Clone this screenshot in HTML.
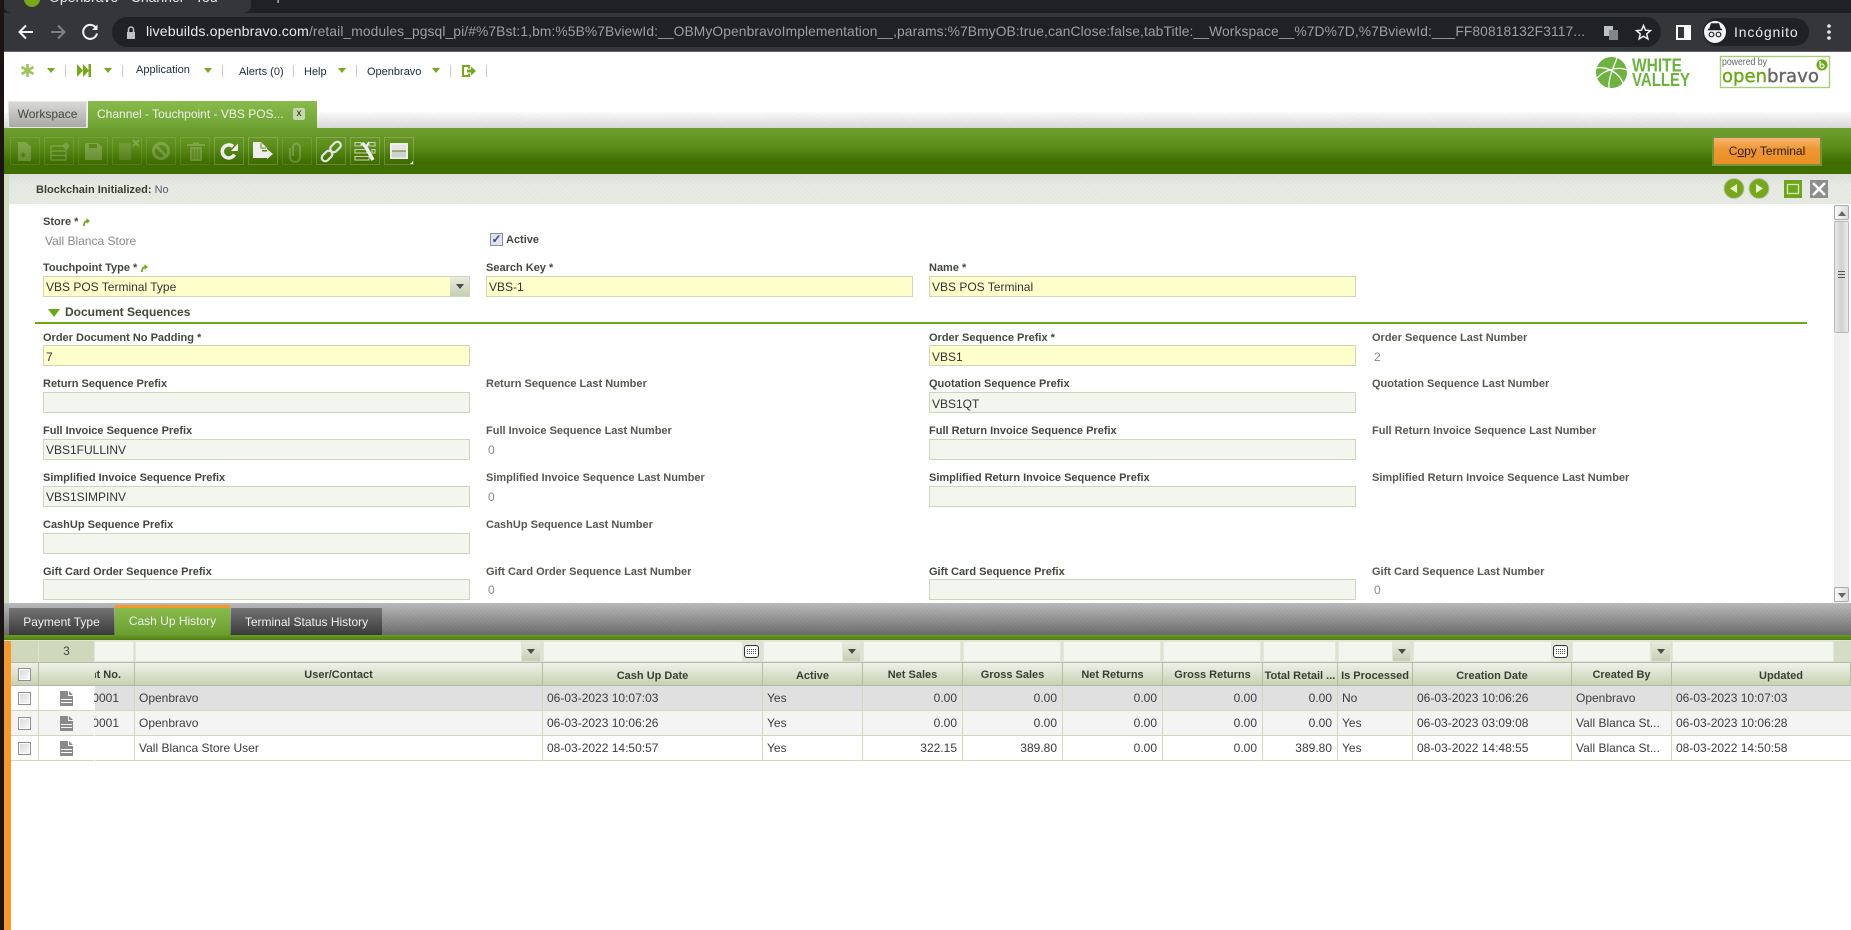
<!DOCTYPE html>
<html lang="en"><head><meta charset="utf-8"><title>Openbravo - Channel - Touchpoint</title>
<style>
html,body{margin:0;padding:0;width:1851px;height:930px;overflow:hidden;background:#fff}
body{position:relative;font-family:"Liberation Sans",sans-serif;font-size:12px;color:#333}
.a,.l,.v,.i,.n,.s,.ar{position:absolute}
.l{font-weight:bold;font-size:11px;line-height:14px;color:#42483c;white-space:nowrap;margin-top:1px}
.l.g{color:#55594f}
.v{font-size:12px;line-height:16px;color:#8a8a8a;white-space:nowrap}
.i{box-sizing:border-box;width:427px;height:21px;border:1px solid #cfd6b8;background:#f3f6ee;padding:0 2px;line-height:21px;color:#333;white-space:nowrap}
.i.r{background:#ffffcc}
.n{font-size:11px;line-height:14px;color:#1b2b3c;white-space:nowrap}
.s{width:1px;height:12px;top:65px;background:#c9c9c9}
.ar{width:0;height:0;border-left:4.500px solid transparent;border-right:4.500px solid transparent;border-top:5px solid #76a81a;top:68px}
.gr{position:absolute;left:95px;display:flex;width:1756px;height:25px}
.gr>div{box-sizing:border-box;flex:none;height:25px;border-right:1px solid #d2d9bb;border-bottom:1px solid #d2d9bb;line-height:24px;padding:0 5px 0 4px;white-space:nowrap;overflow:hidden;color:#3c3c3c}
.gr>div.t{text-align:right}
.hd{position:absolute;left:95px;top:663px;display:flex;width:1756px;height:23px}
.hd>div{box-sizing:border-box;flex:none;height:23px;border-right:1px solid #b8bdab;border-bottom:1px solid #b4b9a8;text-align:center;font-weight:bold;font-size:11px;line-height:25px;color:#3a3f33;white-space:nowrap;overflow:hidden;background:linear-gradient(#eff1ea,#c8d2b2);position:relative}
.fl{position:absolute;top:642px;height:19px;background:#f3f6ee;box-shadow:0 0 0 1px #e3e7d9}
.fb{position:absolute;top:642px;height:19px;background:linear-gradient(#e9ecdf,#c6cfb3)}
.fb:after{content:"";position:absolute;left:50%;top:7px;margin-left:-4px;border-left:4px solid transparent;border-right:4px solid transparent;border-top:5px solid #4a4a4a}
.cal{position:absolute;top:645px;width:13px;height:11px;background:#fff;border:1px solid #333;border-radius:3px}
.cal:after{content:"";position:absolute;left:2px;top:3px;width:9px;height:6px;background:repeating-linear-gradient(0deg,#fff 0 1px,transparent 1px 2px),repeating-linear-gradient(90deg,#444 0 1px,#fff 1px 2px)}
.cb{position:absolute;left:18px;width:11px;height:11px;border:1px solid #8f8f8f;background:linear-gradient(135deg,#d8d8d8,#fafafa);box-shadow:inset 0 0 0 1px #fff}
.lt{position:absolute;top:608px;height:27px;background:linear-gradient(#737373,#3a3a3a);color:#f0f0f0;line-height:28px;text-align:center;box-sizing:border-box}
</style></head><body>

<!-- Chrome -->
<div class="a" style="left:0;top:0;width:1851px;height:13px;background:#202124"></div>
<div class="a" style="left:4px;top:0;width:247px;height:13px;background:#35363a;border-radius:0 0 8px 8px;overflow:hidden;color:#e8eaed;font-size:14px;line-height:16px;white-space:nowrap"><span style="position:absolute;left:45px;top:-11px">Openbravo - Channel - Tou</span><span style="position:absolute;left:20px;top:-9px;width:16px;height:16px;border-radius:50%;background:#76a81a"></span></div>
<div class="a" style="left:274px;top:-9px;color:#e8eaed;font-size:14px">+</div>
<div class="a" style="left:0;top:13px;width:1851px;height:38px;background:#35363a"></div>
<div class="a" style="left:0;top:51px;width:1851px;height:1px;background:#5f6368"></div>
<div class="a" style="left:112px;top:17px;width:1549px;height:30px;border-radius:15px;background:#202124"></div>
<div class="a" style="left:1703px;top:18px;width:106px;height:28px;border-radius:14px;background:#202124"></div>
<svg class="a" style="left:0;top:13px" width="1851" height="38" viewBox="0 13 1851 38" fill="none">
<path d="M33 32H20M26 25.500L19.500 32L26 38.500" stroke="#f1f3f4" stroke-width="2"/>
<path d="M51 32H64M58 25.500L64.500 32L58 38.500" stroke="#7d8084" stroke-width="2"/>
<path d="M96 28A7 7 0 1 0 97 33.500" stroke="#f1f3f4" stroke-width="2"/><path d="M97.500 24.500V30H92z" fill="#f1f3f4"/>
<path d="M128.500 32v-2.500a2.500 2.500 0 0 1 5 0V32" stroke="#bdc1c6" stroke-width="1.500"/><path d="M127 32h8v7h-8z" fill="#bdc1c6"/>
<rect x="1604" y="26" width="9" height="10" fill="#bdc1c6"/><rect x="1609" y="30" width="9" height="10" fill="#80868b"/>
<path d="M1643.500 25.500l2 4.700 5 .4-3.800 3.300 1.200 5-4.400-2.700-4.400 2.700 1.200-5-3.800-3.300 5-.4z" stroke="#e8eaed" stroke-width="1.500"/>
<rect x="1677" y="26" width="13" height="13" stroke="#fff" stroke-width="2"/><rect x="1684" y="26" width="6" height="13" fill="#fff"/>
<circle cx="1715" cy="32" r="11" fill="#f1f3f4"/><path d="M1708 29.500h14M1710 29l1.500-5h7l1.500 5z" stroke="#202124" stroke-width="1.500" fill="#202124"/><circle cx="1711.500" cy="34.500" r="2.300" stroke="#202124" stroke-width="1.200"/><circle cx="1718.500" cy="34.500" r="2.300" stroke="#202124" stroke-width="1.200"/>
<circle cx="1829" cy="26" r="1.800" fill="#e8eaed"/><circle cx="1829" cy="32" r="1.800" fill="#e8eaed"/><circle cx="1829" cy="38" r="1.800" fill="#e8eaed"/>
</svg>
<div class="a" style="left:146px;top:23px;width:1450px;font-size:13.800px;line-height:18px;color:#9aa0a6;white-space:nowrap;overflow:hidden;letter-spacing:.11px"><span style="color:#e8eaed;font-size:14.200px;letter-spacing:.12px">livebuilds.openbravo.com</span>/retail_modules_pgsql_pi/#%7Bst:1,bm:%5B%7BviewId:__OBMyOpenbravoImplementation__,params:%7BmyOB:true,canClose:false,tabTitle:__Workspace__%7D%7D,%7BviewId:___FF80818132F3117...</div>
<div class="a" style="left:1734px;top:23px;font-size:14px;line-height:18px;color:#e8eaed;letter-spacing:.85px">Incógnito</div>
<div class="a" style="left:0;top:0;width:4px;height:930px;background:#1a1415"></div>

<!-- Nav -->
<svg class="a" style="left:20px;top:63px" width="15" height="15" viewBox="0 0 15 15" fill="none" stroke="#9cc25a" stroke-width="2.600"><path d="M7.500 1V14M1.500 4L13.500 11M13.500 4L1.500 11"/></svg>
<div class="ar" style="left:47px"></div><div class="s" style="left:65px"></div>
<svg class="a" style="left:77px;top:64px" width="14" height="13" viewBox="0 0 14 13" fill="#76a81a"><path d="M0 0L6 6.500L0 13zM6 0L12 6.500L6 13z"/><rect x="11.500" y="0" width="2.500" height="13"/></svg>
<div class="ar" style="left:104px"></div><div class="s" style="left:122px"></div>
<div class="n" style="left:136px;top:63px">Application</div><div class="ar" style="left:204px"></div><div class="s" style="left:222px"></div>
<div class="n" style="left:239px;top:65px">Alerts (0)</div><div class="s" style="left:293px"></div>
<div class="n" style="left:304px;top:65px">Help</div><div class="ar" style="left:338px"></div><div class="s" style="left:356px"></div>
<div class="n" style="left:367px;top:65px">Openbravo</div><div class="ar" style="left:432px"></div><div class="s" style="left:450px"></div>
<svg class="a" style="left:461px;top:64px" width="16" height="14" viewBox="0 0 16 14"><path d="M1 1H9V4.500H7V3H3V11H7V9.500H9V13H1z" fill="#76a81a"/><path d="M6 5.500H10V2.500L15 7L10 11.500V8.500H6z" fill="#76a81a"/></svg>
<div class="s" style="left:486px"></div>

<!-- Logos -->
<svg class="a" style="left:1590px;top:52px" width="261" height="40" viewBox="1590 52 261 40" fill="none">
<circle cx="1611.500" cy="72.500" r="15.500" fill="#6cb33f"/>
<path d="M1596 68C1606 66 1620 72 1624 86M1597 78C1604 70 1618 66 1627 70M1617 58C1614 66 1608 78 1609 88" stroke="#fff" stroke-width="1.300"/>
<text x="1632" y="71.500" font-family="Liberation Sans" font-weight="bold" font-size="18.500" fill="#6cb33f" textLength="50" lengthAdjust="spacingAndGlyphs">WHITE</text>
<text x="1632" y="86" font-family="Liberation Sans" font-weight="bold" font-size="18.500" fill="#6cb33f" textLength="58" lengthAdjust="spacingAndGlyphs">VALLEY</text>
<rect x="1720.500" y="56.500" width="109" height="31" fill="#fff" stroke="#a9cf75" stroke-width="1.400"/>
<text x="1722" y="65" font-family="Liberation Sans" font-size="10" fill="#666" textLength="45" lengthAdjust="spacingAndGlyphs">powered by</text>
<text x="1722" y="82" font-family="DejaVu Sans" font-size="18" fill="#6aa814" stroke="#6aa814" stroke-width=".4" textLength="45" lengthAdjust="spacingAndGlyphs">open</text>
<text x="1767" y="82" font-family="DejaVu Sans" font-size="18" fill="#666" stroke="#666" stroke-width=".4" textLength="52" lengthAdjust="spacingAndGlyphs">bravo</text>
<circle cx="1822" cy="65" r="5.500" fill="#6aa814"/><circle cx="1822" cy="66" r="2" fill="none" stroke="#fff" stroke-width="1.200"/><path d="M1820 66V61" stroke="#fff" stroke-width="1.200"/>
</svg>

<!-- Top tabs -->
<div class="a" style="left:4px;top:112px;width:1847px;height:16px;background:repeating-linear-gradient(45deg,rgba(0,0,0,.04) 0 1px,transparent 1px 2px),linear-gradient(#fff,#dcdcdc)"></div>
<div class="a" style="left:8px;top:101px;width:79px;height:27px;box-sizing:border-box;border:1px solid #e6e6e6;background:linear-gradient(#d8d8d6,#a9a9a6);color:#444;text-align:center;line-height:24px">Workspace</div>
<div class="a" style="left:88px;top:101px;width:229px;height:27px;background:linear-gradient(#8abb4c,#6da233);color:#f1f5e8;line-height:27px;padding-left:9px;box-sizing:border-box;white-space:nowrap">Channel - Touchpoint - VBS POS...</div>
<div class="a" style="left:293px;top:108px;width:12px;height:12px;background:#c7d8a8;color:#222;font-size:10px;line-height:12px;text-align:center;border-radius:2px">x</div>

<!-- Green toolbar -->
<div class="a" style="left:4px;top:128px;width:1847px;height:46px;background:linear-gradient(#6f9f31 0,#5c8d1a 40%,#3f6d00 75%,#3f6d00)"></div>
<svg class="a" style="left:0;top:128px" width="430" height="46" viewBox="0 128 430 46" fill="none">
<g stroke="#fff" stroke-opacity=".1"><rect x="10.500" y="137.500" width="29" height="27"/><rect x="44.500" y="137.500" width="29" height="27"/><rect x="78.500" y="137.500" width="29" height="27"/><rect x="112.500" y="137.500" width="29" height="27"/><rect x="146.500" y="137.500" width="29" height="27"/><rect x="180.500" y="137.500" width="29" height="27"/><rect x="282.500" y="137.500" width="29" height="27"/></g>
<g stroke="#fff" stroke-opacity=".2"><rect x="214.500" y="137.500" width="29" height="27"/><rect x="248.500" y="137.500" width="29" height="27"/><rect x="316.500" y="137.500" width="29" height="27"/><rect x="350.500" y="137.500" width="29" height="27"/><rect x="384.500" y="137.500" width="29" height="27"/></g>
<g opacity=".2">
<path d="M18 142H26L31 147V161H18z" fill="#fff"/><path d="M23 152V158M20.500 153.500L25.500 156.500M25.500 153.500L20.500 156.500" stroke="#4e7e10"/>
<path d="M51 146H66V160H51zM51 151H66M51 155.500H66" stroke="#fff" stroke-width="1.500"/><circle cx="66" cy="146" r="3" fill="#fff"/>
<path d="M85 143H98L102 147V160H85z" fill="#fff"/><rect x="89" y="144" width="8" height="4" fill="#4e7e10"/>
<path d="M119 143H131V160H119z" fill="#fff" fill-opacity=".5"/><path d="M133 140L139 146M139 140L133 146" stroke="#fff" stroke-width="2"/>
<circle cx="161" cy="151" r="7.500" stroke="#fff" stroke-width="3"/><path d="M156 146L166 156" stroke="#fff" stroke-width="3"/>
<path d="M187 145H205" stroke="#fff" stroke-width="2"/><path d="M190 147H202V161H190z" fill="#fff"/><path d="M193 149V159M196 149V159M199 149V159" stroke="#4e7e10"/><rect x="193" y="142.500" width="6" height="2" fill="#fff"/>
<path d="M293 156V147A3.500 3.500 0 0 1 300 147V157A5 5 0 0 1 290 157V148" stroke="#fff" stroke-width="2"/>
</g>
<path d="M233 146.500A6.500 6.500 0 1 0 234.500 154.500" stroke="#eee" stroke-width="3.500"/><path d="M238 143.500V151H231z" fill="#eee"/>
<path d="M253 142H261L267 148V150H262V155H267V158H253z" fill="#eee"/><path d="M262 151.500H267V149L273 154L267 159V156H262z" fill="#eee"/><path d="M261 143V148H266" stroke="#5c8d1a"/>
<g stroke="#e4e4e4" stroke-width="2.200"><rect x="321" y="152.500" width="12" height="7" rx="3.500" transform="rotate(-45 327 156)"/><rect x="329.500" y="143.500" width="12" height="7" rx="3.500" transform="rotate(-45 335.500 147)"/></g>
<g stroke="#c8d4b0" stroke-width="1.100"><path d="M355 142.500H361V146H355zM355 149.500H367V153H355zM355 156.500H369V160H355zM369 142.500H375V146H369zM372 149.500H375V153H372z"/></g>
<path d="M362 143L366 147L373 160" stroke="#eee" stroke-width="3.500"/><path d="M366 147L369 142" stroke="#eee" stroke-width="2"/>
<rect x="391" y="144" width="16" height="14" stroke="#eee" stroke-width="2"/><rect x="392" y="145" width="14" height="5.500" fill="#e4e4e4"/><rect x="392" y="151.500" width="14" height="6" fill="#d0d0d0"/><path d="M413 161V164H410z" fill="#fff"/>
</svg>
<div class="a" style="left:1712px;top:136px;width:110px;height:30px;box-sizing:border-box;border:2px solid #71953a;background:linear-gradient(#f7b46f,#ee9631 45%,#eb8f24);color:#2a1c05;text-align:center;line-height:26px">C<u>o</u>py Terminal</div>

<!-- Status -->
<div class="a" style="left:4px;top:174px;width:5px;height:429px;background:#d2dcc0"></div>
<div class="a" style="left:9px;top:174px;width:1842px;height:30px;background:repeating-linear-gradient(45deg,rgba(0,0,0,.025) 0 1px,transparent 1px 3px),linear-gradient(#dfe0dc,#e8ebe4 40%)"></div>
<div class="a" style="left:36px;top:183px;font-size:11px;line-height:14px;color:#3a3f33"><b>Blockchain Initialized:</b> <span style="color:#55606a">No</span></div>
<svg class="a" style="left:1720px;top:176px" width="112" height="26" viewBox="1720 176 112 26">
<circle cx="1734" cy="188.500" r="10" fill="#76a81a" stroke="#bfc4b8"/><path d="M1737 184V193L1730 188.500z" fill="#e8f0d8"/>
<circle cx="1759" cy="188.500" r="10" fill="#76a81a" stroke="#bfc4b8"/><path d="M1756 184V193L1763 188.500z" fill="#e8f0d8"/>
<rect x="1784" y="180" width="18" height="18" fill="#6fa51e"/><rect x="1787.500" y="184.500" width="11" height="9" fill="none" stroke="#d8e8b8" stroke-width="1.300"/>
<rect x="1810" y="180" width="18" height="18" fill="#8d8d8d"/><path d="M1813 183L1825 195M1825 183L1813 195" stroke="#fff" stroke-width="2.500"/>
</svg>

<!-- Scrollbar -->
<div class="a" style="left:1834px;top:205px;width:15px;height:398px;background:#f0f0f0"></div>
<div class="a" style="left:1834px;top:205px;width:15px;height:15px;box-sizing:border-box;border:1px solid #aaa;border-radius:2px;background:linear-gradient(90deg,#fafafa,#ddd)"></div>
<div class="a" style="left:1838px;top:211px;border-left:4px solid transparent;border-right:4px solid transparent;border-bottom:5px solid #666"></div>
<div class="a" style="left:1834px;top:221px;width:15px;height:112px;box-sizing:border-box;border:1px solid #b8b8b8;border-radius:2px;background:linear-gradient(90deg,#e8e8e8,#d0d0d0 50%,#ececec)"></div>
<div class="a" style="left:1838px;top:271px;width:7px;height:8px;background:repeating-linear-gradient(#555 0 1px,transparent 1px 3px)"></div>
<div class="a" style="left:1834px;top:587px;width:15px;height:15px;box-sizing:border-box;border:1px solid #aaa;border-radius:2px;background:linear-gradient(90deg,#fafafa,#ddd)"></div>
<div class="a" style="left:1838px;top:593px;border-left:4px solid transparent;border-right:4px solid transparent;border-top:5px solid #666"></div>

<!-- Form -->
<div class="l" style="left:43px;top:214px">Store *</div>
<svg class="a" style="left:82px;top:217px" width="8" height="9" viewBox="0 0 7 8" fill="#6aa814"><path d="M1 8C1 5 2 3 4 3V1L7 3.500L4 6V4.500C3 4.500 2.500 6 2.500 8z"/></svg>
<div class="v" style="left:45px;top:233px;color:#888">Vall Blanca Store</div>
<div class="a" style="left:490px;top:233px;width:11px;height:11px;border:1px solid #8a8f98;background:#dfe4ec;color:#2b4a9a;font-size:12px;line-height:11px;text-align:center;font-weight:bold">✓</div>
<div class="l" style="left:506px;top:232px">Active</div>

<div class="l" style="left:43px;top:260px">Touchpoint Type *</div>
<svg class="a" style="left:140px;top:263px" width="8" height="9" viewBox="0 0 7 8" fill="#6aa814"><path d="M1 8C1 5 2 3 4 3V1L7 3.500L4 6V4.500C3 4.500 2.500 6 2.500 8z"/></svg>
<div class="l" style="left:486px;top:260px">Search Key *</div>
<div class="l" style="left:929px;top:260px">Name *</div>
<div class="i r" style="left:43px;top:276px">VBS POS Terminal Type</div>
<div class="fb" style="left:450px;top:277px;width:19px;height:19px"></div>
<div class="i r" style="left:486px;top:276px">VBS-1</div>
<div class="i r" style="left:929px;top:276px">VBS POS Terminal</div>

<div class="a" style="left:48px;top:309px;border-left:6px solid transparent;border-right:6px solid transparent;border-top:8px solid #6aa814"></div>
<div class="l" style="left:65px;top:304px;font-size:12px">Document Sequences</div>
<div class="a" style="left:35px;top:322px;width:1772px;height:2px;background:#6aa814"></div>

<div class="l" style="left:43px;top:330px">Order Document No Padding *</div>
<div class="i r" style="left:43px;top:345px;line-height:23px">7</div>
<div class="l" style="left:929px;top:330px">Order Sequence Prefix *</div>
<div class="i r" style="left:929px;top:345px;line-height:23px">VBS1</div>
<div class="l g" style="left:1372px;top:330px">Order Sequence Last Number</div>
<div class="v" style="left:1374px;top:349px">2</div>

<div class="l" style="left:43px;top:376px">Return Sequence Prefix</div>
<div class="i" style="left:43px;top:392px"></div>
<div class="l g" style="left:486px;top:376px">Return Sequence Last Number</div>
<div class="l" style="left:929px;top:376px">Quotation Sequence Prefix</div>
<div class="i" style="left:929px;top:392px;line-height:23px">VBS1QT</div>
<div class="l g" style="left:1372px;top:376px">Quotation Sequence Last Number</div>

<div class="l" style="left:43px;top:423px">Full Invoice Sequence Prefix</div>
<div class="i" style="left:43px;top:439px">VBS1FULLINV</div>
<div class="l g" style="left:486px;top:423px">Full Invoice Sequence Last Number</div>
<div class="v" style="left:488px;top:442px">0</div>
<div class="l" style="left:929px;top:423px">Full Return Invoice Sequence Prefix</div>
<div class="i" style="left:929px;top:439px"></div>
<div class="l g" style="left:1372px;top:423px">Full Return Invoice Sequence Last Number</div>

<div class="l" style="left:43px;top:470px">Simplified Invoice Sequence Prefix</div>
<div class="i" style="left:43px;top:486px">VBS1SIMPINV</div>
<div class="l g" style="left:486px;top:470px">Simplified Invoice Sequence Last Number</div>
<div class="v" style="left:488px;top:489px">0</div>
<div class="l" style="left:929px;top:470px">Simplified Return Invoice Sequence Prefix</div>
<div class="i" style="left:929px;top:486px"></div>
<div class="l g" style="left:1372px;top:470px">Simplified Return Invoice Sequence Last Number</div>

<div class="l" style="left:43px;top:517px">CashUp Sequence Prefix</div>
<div class="i" style="left:43px;top:533px"></div>
<div class="l g" style="left:486px;top:517px">CashUp Sequence Last Number</div>

<div class="l" style="left:43px;top:564px">Gift Card Order Sequence Prefix</div>
<div class="i" style="left:43px;top:579px"></div>
<div class="l g" style="left:486px;top:564px">Gift Card Order Sequence Last Number</div>
<div class="v" style="left:488px;top:582px">0</div>
<div class="l" style="left:929px;top:564px">Gift Card Sequence Prefix</div>
<div class="i" style="left:929px;top:579px"></div>
<div class="l g" style="left:1372px;top:564px">Gift Card Sequence Last Number</div>
<div class="v" style="left:1374px;top:582px">0</div>

<!-- Lower tabs -->
<div class="a" style="left:4px;top:603px;width:1847px;height:32px;background:repeating-linear-gradient(45deg,rgba(0,0,0,.04) 0 1px,transparent 1px 3px),linear-gradient(#bcbcbc,#6c6c6c)"></div>
<div class="a" style="left:4px;top:635px;width:1847px;height:5px;background:linear-gradient(#6b9a2a,#4f7f10)"></div>
<div class="a" style="left:4px;top:640px;width:1847px;height:1px;background:#dfe5d3"></div>
<div class="lt" style="left:9px;width:105px">Payment Type</div>
<div class="lt" style="left:115px;top:605px;height:30px;width:115px;background:linear-gradient(#8abb4c,#6a9f30);border-top:3px solid #f7982a;line-height:26px">Cash Up History</div>
<div class="lt" style="left:231px;width:151px">Terminal Status History</div>

<!-- Grid -->
<div class="a" style="left:4px;top:641px;width:7px;height:289px;background:#f7982a"></div>
<div class="a" style="left:11px;top:641px;width:1840px;height:22px;background:#dde2d2"></div>
<div class="a" style="left:11px;top:641px;width:27px;height:21px;background:#cfd8bb"></div>
<div class="a" style="left:39px;top:641px;width:55px;height:21px;background:#cfd8bb;text-align:center;line-height:21px;color:#444">3</div>
<div class="a" style="left:11px;top:662px;width:1840px;height:1px;background:#b4b9a8"></div>
<div class="a" style="left:1833px;top:641px;width:18px;height:21px;background:#d5ddc6"></div>
<div class="fl" style="left:95px;width:38px"></div>
<div class="fl" style="left:136px;width:385px"></div><div class="fb" style="left:522px;width:18px"></div>
<div class="fl" style="left:544px;width:198px"></div><div class="a" style="left:743px;top:642px;width:17px;height:19px;background:#e2e6d8"></div><div class="cal" style="left:744px"></div>
<div class="fl" style="left:764px;width:78px"></div><div class="fb" style="left:843px;width:17px"></div>
<div class="fl" style="left:864px;width:96px"></div>
<div class="fl" style="left:964px;width:96px"></div>
<div class="fl" style="left:1064px;width:96px"></div>
<div class="fl" style="left:1164px;width:96px"></div>
<div class="fl" style="left:1264px;width:71px"></div>
<div class="fl" style="left:1339px;width:53px"></div><div class="fb" style="left:1393px;width:17px"></div>
<div class="fl" style="left:1414px;width:137px"></div><div class="a" style="left:1552px;top:642px;width:17px;height:19px;background:#e2e6d8"></div><div class="cal" style="left:1553px"></div>
<div class="fl" style="left:1573px;width:77px"></div><div class="fb" style="left:1652px;width:18px"></div>
<div class="fl" style="left:1673px;width:160px"></div>

<div class="hd">
<div style="width:40px"><span style="position:absolute;right:13px;top:0">Document No.</span></div>
<div style="width:408px">User/Contact</div>
<div style="width:220px;line-height:27px">Cash Up Date</div>
<div style="width:100px;line-height:27px">Active</div>
<div style="width:100px">Net Sales</div>
<div style="width:100px">Gross Sales</div>
<div style="width:100px">Net Returns</div>
<div style="width:100px">Gross Returns</div>
<div style="width:75px;line-height:27px">Total Retail ...</div>
<div style="width:75px;line-height:27px">Is Processed</div>
<div style="width:159px;line-height:27px">Creation Date</div>
<div style="width:100px">Created By</div>
<div style="width:179px;line-height:27px;padding-left:40px">Updated</div>
</div>

<div class="gr" style="top:686px;background:#e0e0e0">
<div style="width:40px;padding:0 15px 0 0;text-align:right;overflow:visible;direction:rtl">00001</div><div style="width:408px">Openbravo</div><div style="width:220px">06-03-2023 10:07:03</div><div style="width:100px">Yes</div><div class="t" style="width:100px">0.00</div><div class="t" style="width:100px">0.00</div><div class="t" style="width:100px">0.00</div><div class="t" style="width:100px">0.00</div><div class="t" style="width:75px">0.00</div><div style="width:75px">No</div><div style="width:159px">06-03-2023 10:06:26</div><div style="width:100px">Openbravo</div><div style="width:179px;border-right:0">06-03-2023 10:07:03</div>
</div>
<div class="gr" style="top:711px;background:#f4f4f4">
<div style="width:40px;padding:0 15px 0 0;text-align:right;overflow:visible;direction:rtl">00001</div><div style="width:408px">Openbravo</div><div style="width:220px">06-03-2023 10:06:26</div><div style="width:100px">Yes</div><div class="t" style="width:100px">0.00</div><div class="t" style="width:100px">0.00</div><div class="t" style="width:100px">0.00</div><div class="t" style="width:100px">0.00</div><div class="t" style="width:75px">0.00</div><div style="width:75px">Yes</div><div style="width:159px">06-03-2023 03:09:08</div><div style="width:100px">Vall Blanca St...</div><div style="width:179px;border-right:0">06-03-2023 10:06:28</div>
</div>
<div class="gr" style="top:736px;background:#fff">
<div style="width:40px"></div><div style="width:408px">Vall Blanca Store User</div><div style="width:220px">08-03-2022 14:50:57</div><div style="width:100px">Yes</div><div class="t" style="width:100px">322.15</div><div class="t" style="width:100px">389.80</div><div class="t" style="width:100px">0.00</div><div class="t" style="width:100px">0.00</div><div class="t" style="width:75px">389.80</div><div style="width:75px">Yes</div><div style="width:159px">08-03-2022 14:48:55</div><div style="width:100px">Vall Blanca St...</div><div style="width:179px;border-right:0">08-03-2022 14:50:58</div>
</div>

<!-- Frozen columns -->
<div class="a" style="left:11px;top:663px;width:84px;height:23px;background:linear-gradient(#eff1ea,#c8d2b2);box-sizing:border-box;border-bottom:1px solid #b4b9a8"></div>
<div class="a" style="left:38px;top:663px;width:1px;height:22px;background:#b8bdab"></div>
<div class="a" style="left:11px;top:686px;width:83px;height:25px;background:#fff;box-sizing:border-box;border-bottom:1px solid #d2d9bb"></div>
<div class="a" style="left:11px;top:711px;width:83px;height:25px;background:#f4f4f4;box-sizing:border-box;border-bottom:1px solid #d2d9bb"></div>
<div class="a" style="left:11px;top:736px;width:83px;height:25px;background:#fff;box-sizing:border-box;border-bottom:1px solid #d2d9bb"></div>
<div class="a" style="left:38px;top:686px;width:1px;height:75px;background:#d2d9bb"></div>
<div class="cb" style="top:668px"></div>
<div class="cb" style="top:692px"></div>
<div class="cb" style="top:717px"></div>
<div class="cb" style="top:742px"></div>
<svg class="a" style="left:60px;top:691px" width="13" height="65" viewBox="0 0 13 65" fill="#8a8a8a">
<path d="M0 0H8V5H13V15H0z"/><path d="M9 0L13 4H9z"/><path d="M1 8.500H12M1 11.500H12" stroke="#fff"/>
<path d="M0 25H8V30H13V40H0z"/><path d="M9 25L13 29H9z"/><path d="M1 33.500H12M1 36.500H12" stroke="#f4f4f4"/>
<path d="M0 50H8V55H13V65H0z"/><path d="M9 50L13 54H9z"/><path d="M1 58.500H12M1 61.500H12" stroke="#fff"/>
</svg>
</body></html>
